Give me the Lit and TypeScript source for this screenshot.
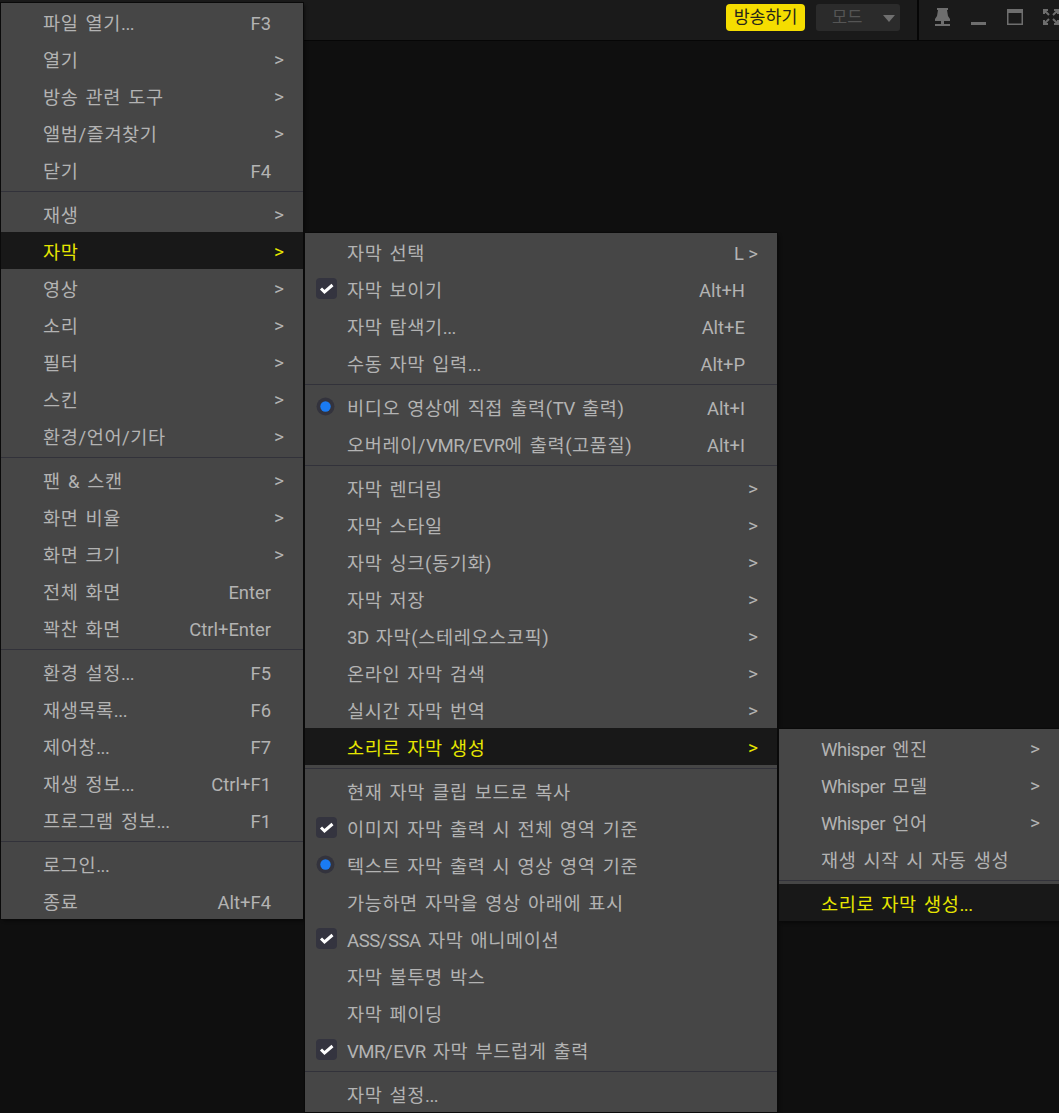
import { LitElement, html, css, svg } from "lit";
import { customElement } from "lit/decorators.js";

type Row = { t?: string; k?: string; a?: boolean; m?: "c" | "r"; h?: boolean; sep?: boolean };
const S: Row = { sep: true };

const main: Row[] = [
  { t: "파일 열기...", k: "F3" }, { t: "열기", a: true }, { t: "방송 관련 도구", a: true }, { t: "앨범/즐겨찾기", a: true }, { t: "닫기", k: "F4" }, S,
  { t: "재생", a: true }, { t: "자막", a: true, h: true }, { t: "영상", a: true }, { t: "소리", a: true }, { t: "필터", a: true }, { t: "스킨", a: true }, { t: "환경/언어/기타", a: true }, S,
  { t: "팬 & 스캔", a: true }, { t: "화면 비율", a: true }, { t: "화면 크기", a: true }, { t: "전체 화면", k: "Enter" }, { t: "꽉찬 화면", k: "Ctrl+Enter" }, S,
  { t: "환경 설정...", k: "F5" }, { t: "재생목록...", k: "F6" }, { t: "제어창...", k: "F7" }, { t: "재생 정보...", k: "Ctrl+F1" }, { t: "프로그램 정보...", k: "F1" }, S,
  { t: "로그인..." }, { t: "종료", k: "Alt+F4" },
];
const sub: Row[] = [
  { t: "자막 선택", k: "L >" }, { t: "자막 보이기", k: "Alt+H", m: "c" }, { t: "자막 탐색기...", k: "Alt+E" }, { t: "수동 자막 입력...", k: "Alt+P" }, S,
  { t: "비디오 영상에 직접 출력(TV 출력)", k: "Alt+I", m: "r" }, { t: "오버레이/VMR/EVR에 출력(고품질)", k: "Alt+I" }, S,
  { t: "자막 렌더링", a: true }, { t: "자막 스타일", a: true }, { t: "자막 싱크(동기화)", a: true }, { t: "자막 저장", a: true }, { t: "3D 자막(스테레오스코픽)", a: true }, { t: "온라인 자막 검색", a: true }, { t: "실시간 자막 번역", a: true }, { t: "소리로 자막 생성", a: true, h: true }, S,
  { t: "현재 자막 클립 보드로 복사" }, { t: "이미지 자막 출력 시 전체 영역 기준", m: "c" }, { t: "텍스트 자막 출력 시 영상 영역 기준", m: "r" }, { t: "가능하면 자막을 영상 아래에 표시" }, { t: "ASS/SSA 자막 애니메이션", m: "c" }, { t: "자막 불투명 박스" }, { t: "자막 페이딩" }, { t: "VMR/EVR 자막 부드럽게 출력", m: "c" }, S,
  { t: "자막 설정..." },
];
const third: Row[] = [
  { t: "Whisper 엔진", a: true }, { t: "Whisper 모델", a: true }, { t: "Whisper 언어", a: true }, { t: "재생 시작 시 자동 생성" }, S, { t: "소리로 자막 생성...", h: true },
];

const checkIcon = svg`<svg class="mark" width="21" height="21" viewBox="0 0 21 21"><rect width="21" height="21" rx="4" fill="#34343f"/><path d="M5 10.500l3.500 3.500L16.500 7" fill="none" stroke="#fff" stroke-width="3"/></svg>`;
const radioIcon = svg`<svg class="mark radio" width="19" height="19" viewBox="0 0 19 19"><circle cx="9.500" cy="9.500" r="9" fill="#33333d"/><circle cx="9.500" cy="9.500" r="5.200" fill="#1a7bf2"/></svg>`;

@customElement("app-root")
export class AppRoot extends LitElement {
  static styles = css`
    :host {
      display: block;
      position: relative;
      width: 1059px;
      height: 1113px;
      overflow: hidden;
      background: #0f0f0f;
      font-family: Roboto, "Noto Sans CJK KR", sans-serif;
      font-size: 18.6px;
      color: #b3b3b3;
    }
    .bar {
      display: flex;
      align-items: flex-start;
      justify-content: flex-end;
      height: 40px;
      background: #1a1a1a;
      border-bottom: 1px solid #060606;
    }
    .cast {
      width: 79px;
      height: 27px;
      margin-top: 4px;
      border-radius: 4px;
      background: #f5dd00;
      color: #26261a;
      font-size: 17.3px;
      line-height: 26px;
      text-align: center;
    }
    .mode {
      position: relative;
      width: 84px;
      height: 27px;
      margin: 4px 17px 0 11px;
      border-radius: 3px;
      background: #2b2b2b;
      color: #555;
      font-size: 16.5px;
      line-height: 27px;
      padding-left: 16px;
      box-sizing: border-box;
    }
    .mode svg { position: absolute; left: 67px; top: 11px; }
    .div { width: 2px; height: 40px; background: #060606; }
    .win { display: flex; width: 140px; height: 40px; overflow: hidden; }
    .win svg { display: block; flex: none; }
    .menu {
      position: absolute;
      background: #464646;
      outline: 1px solid #0a0a0a;
      box-shadow: 2px 2px 3px rgba(0, 0, 0, 0.45);
    }
    .m1 { left: 1px; top: 3px; width: 302px; }
    .m2 { left: 305px; top: 233px; width: 472px; }
    .m3 { left: 779px; top: 729px; width: 280px; }
    .row {
      position: relative;
      display: flex;
      align-items: center;
      height: 37px;
      padding: 0 0 0 42px;
      box-sizing: border-box;
      white-space: nowrap;
      word-spacing: 2px;
    }
    .row.h { background: #181818; color: #e6e600; }
    .label { flex: 1; letter-spacing: 0.6px; }
    .lat { letter-spacing: -0.5px; }
    .key { text-align: right; margin-right: 32px; padding-top: 4px; font-size: 18.4px; word-spacing: 0; }
    .m2 .key.more { margin-right: 19px; }
    .arrow { margin-right: 19px; padding-top: 2px; font-size: 19px; }
    .sep { height: 7px; padding-top: 3px; box-sizing: border-box; }
    .sep div { height: 1px; background: #32323a; }
    .mark { position: absolute; left: 11px; top: 8px; }
    .mark.radio { top: 9px; }
  `;

  private renderLabel(t: string) {
    return t.split(/([A-Za-z0-9.]+)/).map((part, i) => (i % 2 ? html`<span class="lat">${part}</span>` : part));
  }

  private renderRows(rows: Row[]) {
    return rows.map((r) => {
      if (r.sep) return html`<div class="sep"><div></div></div>`;
      return html`<div class="row ${r.h ? "h" : ""}">
        ${r.m === "c" ? checkIcon : r.m === "r" ? radioIcon : ""}
        <span class="label">${this.renderLabel(r.t ?? "")}</span>
        ${r.k ? html`<span class="key ${r.k.endsWith(">") ? "more" : ""}">${r.k}</span>` : ""}
        ${r.a ? html`<span class="arrow">&gt;</span>` : ""}
      </div>`;
    });
  }

  render() {
    return html`
      <div class="bar">
        <div class="cast">방송하기</div>
        <div class="mode">모드
          <svg width="12" height="7" viewBox="0 0 12 7"><path d="M0 0h12L6 7z" fill="#6f6f6f"/></svg>
        </div>
        <div class="div"></div>
        <div class="win">
          <svg width="52" height="40" viewBox="0 0 52 40"><path d="M18 8h11v2h-1l1 6 2 3v2h-6v3h6v2H16v-2h6v-3h-6v-2l2-3 1-6h-1z" fill="#6e6e6e"/></svg>
          <svg width="36" height="40" viewBox="0 0 36 40"><rect x="0" y="22" width="15" height="3" fill="#6e6e6e"/></svg>
          <svg width="36" height="40" viewBox="0 0 36 40"><path d="M0 9h16v16H0z M1.500 13v10.500h13V13z" fill="#6e6e6e" fill-rule="evenodd"/></svg>
          <svg width="16" height="40" viewBox="0 0 16 40"><path d="M1 14v-4h4M11 10h4v4M15 20v4h-4M5 24H1v-4M2 11l4 4M14 11l-4 4M14 23l-4-4M2 23l4-4" fill="none" stroke="#6e6e6e" stroke-width="2"/></svg>
        </div>
      </div>
      <div class="menu m1">${this.renderRows(main)}</div>
      <div class="menu m2">${this.renderRows(sub)}</div>
      <div class="menu m3">${this.renderRows(third)}</div>
    `;
  }
}
